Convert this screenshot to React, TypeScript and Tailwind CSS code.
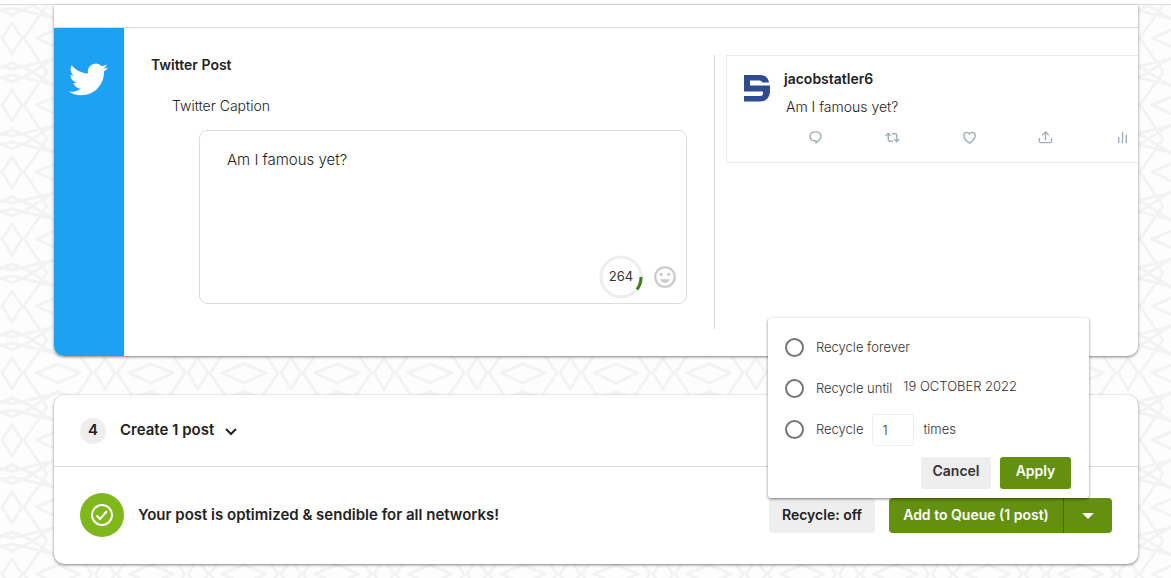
import { useState } from "react";
import type { ReactNode } from "react";

const ACTIONS: { name: string; icon: ReactNode }[] = [
  {
    name: "Reply",
    icon: <path d="M8 2c3.500 0 5.800 2 5.800 4.800 0 2.500-1.800 4-5.300 7v-2.300H8C4.500 11.500 2.200 9.600 2.200 6.800 2.200 4 4.500 2 8 2z" />,
  },
  {
    name: "Retweet",
    icon: <path d="M1 6 3.500 3.500 6 6M3.500 4v6.500c0 .8.500 1.500 1.500 1.500H8M15 10 12.500 12.500 10 10M12.500 12V5.500C12.500 4.700 12 4 11 4H8" />,
  },
  {
    name: "Like",
    icon: <path d="M8 14C4.500 11.500 2 9 2 6 2 4 3.400 2.500 5.100 2.500 6.500 2.500 7.500 3.300 8 4.500c.5-1.200 1.500-2 2.900-2C12.600 2.500 14 4 14 6c0 3-2.500 5.500-6 8z" />,
  },
  {
    name: "Share",
    icon: <path d="M8 10.500V2.500M5 5 8 2l3 3M1.500 9v3c0 .9.600 1.500 1.500 1.500h10c.9 0 1.500-.6 1.500-1.500V9" />,
  },
  {
    name: "Analytics",
    icon: <path d="M4 13.500V8M8 13.500v-11M12 13.500V5.500" />,
  },
];

function BackgroundPattern() {
  return (
    <svg className="pointer-events-none absolute inset-0 h-full w-full" aria-hidden="true">
      <defs>
        <pattern id="weave" width="93" height="67" x="-35" y="5" patternUnits="userSpaceOnUse">
          <g fill="none" stroke="#f3f3f3" strokeWidth="3" strokeLinejoin="round">
            <path d="M47 18 57 33 47 49 37 33z" />
            <path d="M-22 33 0 24 22 33 0 43zM71 33 93 24 115 33 93 43z" />
            <path d="M25 0 47-9 69 0 47 10zM25 67 47 58 69 67 47 77z" />
            <path d="M0 16 26 0M93 16 67 0M0 51 26 67M93 51 67 67" />
            <path d="M11 0 34 33 11 67M82 0 59 33 82 67" />
            <path d="M0 14 47 3 93 14M0 53 47 64 93 53" />
          </g>
        </pattern>
      </defs>
      <rect width="100%" height="100%" fill="url(#weave)" />
    </svg>
  );
}

function TwitterLogo() {
  return (
    <svg viewBox="0 0 24 24" className="size-[39px]" fill="#fff" role="img" aria-label="Twitter">
      <path d="M23.954 4.569a10 10 0 0 1-2.825.775 4.958 4.958 0 0 0 2.163-2.723 9.990 9.990 0 0 1-3.127 1.184 4.920 4.920 0 0 0-8.384 4.482C7.691 8.094 4.066 6.130 1.640 3.161a4.822 4.822 0 0 0-.666 2.475c0 1.710.870 3.213 2.188 4.096a4.904 4.904 0 0 1-2.228-.616v.061a4.923 4.923 0 0 0 3.946 4.827 4.996 4.996 0 0 1-2.212.085 4.937 4.937 0 0 0 4.604 3.417 9.868 9.868 0 0 1-6.102 2.105c-.390 0-.779-.023-1.170-.067a13.995 13.995 0 0 0 7.557 2.209c9.054 0 13.999-7.496 13.999-13.986 0-.209 0-.420-.015-.630a9.936 9.936 0 0 0 2.457-2.548z" />
    </svg>
  );
}

function CharacterCounter({ left }: { left: number }) {
  return (
    <div className="relative flex size-[44px] items-center justify-center text-[13px] text-[#333]">
      <svg viewBox="0 0 44 44" className="absolute inset-0" fill="none" strokeWidth="3" aria-hidden="true">
        <circle cx="22" cy="22" r="20" stroke="#eee" />
        <path d="M42 22A20 20 0 0 1 38 34.500" stroke="#3d7f12" />
      </svg>
      {left}
    </div>
  );
}

function PostEditor({ caption, onChange }: { caption: string; onChange: (v: string) => void }) {
  return (
    <div className="mt-[27px] h-[274px] flex-1 border-r border-[#d8d8d8] px-[27px]">
      <h2 className="text-sm leading-5 font-semibold">Twitter Post</h2>
      <label htmlFor="caption" className="mt-[21px] ml-[21px] block text-sm leading-5 font-light text-[#222]">
        Twitter Caption
      </label>
      <div className="mt-[14px] ml-12 flex h-[174px] flex-col rounded-lg border border-[#dcdcdc]">
        <textarea
          id="caption"
          value={caption}
          onChange={(e) => onChange(e.target.value)}
          className="flex-1 resize-none px-[27px] pt-[17px] text-[15px] leading-6 font-light text-[#222] outline-none"
        />
        <div className="flex items-center justify-end gap-[9px] pr-2 pb-1">
          <CharacterCounter left={264} />
          <button type="button" aria-label="Insert emoji">
            <svg viewBox="0 0 24 24" className="size-[26px]" fill="#c9c9c9">
              <path d="M12 2a10 10 0 1 0 0 20 10 10 0 0 0 0-20zm0 18a8 8 0 1 1 0-16 8 8 0 0 1 0 16z" />
              <circle cx="8.500" cy="9.500" r="1.500" />
              <circle cx="15.500" cy="9.500" r="1.500" />
              <path d="M7.500 14h9c-.7 2-2.400 3.200-4.500 3.200S8.200 16 7.500 14z" />
            </svg>
          </button>
        </div>
      </div>
    </div>
  );
}

function TweetPreview({ caption }: { caption: string }) {
  return (
    <div className="w-[423px] pt-[27px] pl-[11px]">
      <article className="h-[108px] border-y border-l border-[#ebebeb]">
        <div className="flex gap-[13px] pt-[13px] pl-4">
          <svg viewBox="0 0 28 28" className="mt-[5px] size-7" fill="#2f4c92" role="img" aria-label="jacobstatler6">
            <path d="M1 1H17C22.500 1 25.500 4 26 8.500H19.500C19 7.200 18 6.500 16 6.500H7V11.500H27V17C27 23.500 23 27.500 17 27.500H1V22H17C19 22 20 21.200 20 19.500V17.500H1Z" />
          </svg>
          <div>
            <h3 className="text-sm leading-5 font-semibold">jacobstatler6</h3>
            <p className="mt-2 ml-0.5 text-sm leading-5 font-light text-[#222]">{caption}</p>
          </div>
        </div>
        <div className="mt-[13px] flex justify-between pr-2 pl-[81px]">
          {ACTIONS.map((a) => (
            <button key={a.name} type="button" aria-label={a.name}>
              <svg
                viewBox="0 0 16 16"
                className="size-[15px]"
                fill="none"
                stroke="#a3aebb"
                strokeWidth="1.500"
                strokeLinecap="round"
                strokeLinejoin="round"
              >
                {a.icon}
              </svg>
            </button>
          ))}
        </div>
      </article>
    </div>
  );
}

function RecycleRadio({ id, value, onSelect }: { id: string; value: string; onSelect: (v: string) => void }) {
  return (
    <input
      type="radio"
      id={id}
      name="recycle"
      checked={value === id}
      onChange={() => onSelect(id)}
      className="mr-3 size-[19px] shrink-0 appearance-none rounded-full border-2 border-[#757575] checked:bg-[#649010]"
    />
  );
}

function RecycleMenu() {
  const [mode, setMode] = useState("");
  const [times, setTimes] = useState("1");

  return (
    <div className="absolute right-[-214px] bottom-full z-10 h-[180px] w-[321px] rounded-[3px] bg-white pt-[9px] pr-[18px] pl-[17px] text-[13px] font-light text-[#333] shadow-[0_1px_3px_rgba(0,0,0,0.5)]">
      <div className="flex h-[41px] items-center">
        <RecycleRadio id="forever" value={mode} onSelect={setMode} />
        <label htmlFor="forever">Recycle forever</label>
      </div>
      <div className="flex h-[41px] items-center">
        <RecycleRadio id="until" value={mode} onSelect={setMode} />
        <label htmlFor="until">Recycle until</label>
        <button type="button" className="ml-[11px] pb-1">
          19 OCTOBER 2022
        </button>
      </div>
      <div className="flex h-[41px] items-center">
        <RecycleRadio id="times" value={mode} onSelect={setMode} />
        <label htmlFor="times">Recycle</label>
        <input
          type="text"
          aria-label="Number of times"
          value={times}
          onChange={(e) => setTimes(e.target.value)}
          className="mx-[9px] h-8 w-[42px] rounded-[3px] border border-[#eee] px-[9px] outline-none"
        />
        <span>times</span>
      </div>
      <div className="mt-[7px] flex justify-end gap-[9px] text-sm font-semibold">
        <button type="button" className="h-8 w-[70px] rounded-[3px] bg-[#eee] pb-1 text-[#333]">
          Cancel
        </button>
        <button type="button" className="h-8 w-[71px] rounded-[3px] bg-[#649010] pb-1 text-white">
          Apply
        </button>
      </div>
    </div>
  );
}

export default function App() {
  const [caption, setCaption] = useState("Am I famous yet?");

  return (
    <div className="relative min-h-screen overflow-hidden bg-[#fdfdfd] font-['Inter','Liberation_Sans',sans-serif] text-[#222]">
      <BackgroundPattern />
      <div className="relative h-[5px] border-b border-[#dcdcdc] bg-white" />

      <main className="relative pr-[33px] pb-[14px] pl-[54px]">
        <section className="overflow-hidden rounded-b-[10px] bg-white shadow-[0_1px_3px_rgba(0,0,0,0.5)]">
          <div className="h-[23px] border-b border-[#dcdcdc]" />
          <div className="flex h-[328px]">
            <div className="flex w-[70px] justify-center bg-[#1da1f2] pt-8 pr-0.5">
              <TwitterLogo />
            </div>
            <PostEditor caption={caption} onChange={setCaption} />
            <TweetPreview caption={caption} />
          </div>
        </section>

        <section className="mt-[39px] rounded-[10px] bg-white shadow-[0_1px_3px_rgba(0,0,0,0.5)]">
          <div className="flex h-[72px] items-center border-b border-[#dcdcdc] px-[26px] text-[15px] font-semibold">
            <span className="flex size-[26px] items-center justify-center rounded-full bg-[#eee]">4</span>
            <button type="button" className="ml-[14px] flex items-center gap-[11px]">
              Create 1 post
              <svg viewBox="0 0 12 8" className="mt-0.5 h-2 w-3" fill="none" stroke="#222" strokeWidth="2">
                <path d="M1 1 6 6l5-5" />
              </svg>
            </button>
          </div>
          <div className="flex h-[97px] items-center px-[26px] pb-0.5 text-sm font-semibold">
            <span className="flex size-11 items-center justify-center rounded-full bg-[#80b71b]">
              <svg viewBox="0 0 24 24" className="size-6" fill="none" stroke="#fff" strokeWidth="2" aria-hidden="true">
                <circle cx="12" cy="12" r="10" />
                <path d="m6.500 12.500 3.500 3.500 7-8" />
              </svg>
            </span>
            <p className="ml-[14px] flex-1 text-[15px]">Your post is optimized &amp; sendible for all networks!</p>
            <div className="flex gap-[14px] pt-0.5">
              <div className="relative">
                <RecycleMenu />
                <button type="button" className="h-[35px] w-[106px] rounded bg-[#eee] pb-0.5">
                  Recycle: off
                </button>
              </div>
              <div className="flex h-[35px] text-white">
                <button type="button" className="w-[174px] rounded-l bg-[#649010] pb-0.5">
                  Add to Queue (1 post)
                </button>
                <button
                  type="button"
                  aria-label="More queue options"
                  className="flex w-[49px] items-center justify-center rounded-r border-l border-[#466608] bg-[#649010]"
                >
                  <svg viewBox="0 0 12 6" className="h-1.5 w-3" fill="#fff">
                    <path d="M0 0h12L6 6z" />
                  </svg>
                </button>
              </div>
            </div>
          </div>
        </section>
      </main>
    </div>
  );
}
